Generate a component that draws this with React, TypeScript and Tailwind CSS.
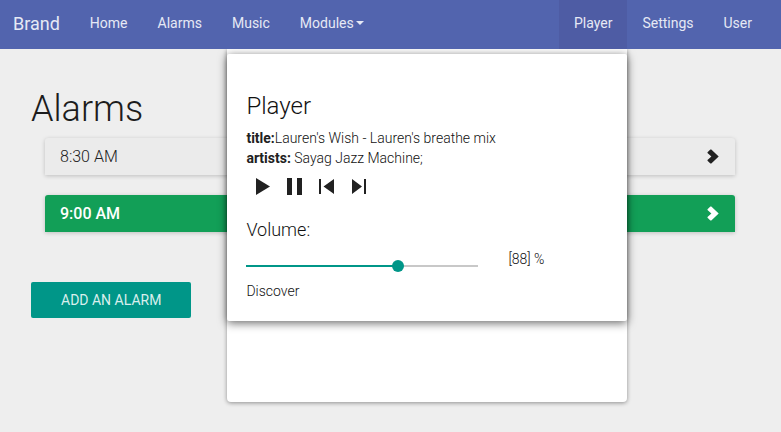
import { useState } from 'react';

const navLink = 'flex h-full items-center px-[15px] pb-[3px] hover:bg-[#4e5ca4]';

function Chevron() {
  return (
    <svg className="h-[15px] w-[12px]" viewBox="0 0 12 15" fill="currentColor" aria-hidden="true">
      <path d="M0.5 3.2 3.4 0.4 4.3 0.4 11.7 7.5 4.3 14.6 3.4 14.6 0.5 11.8 0.5 11 4.4 7.5 0.5 4Z" />
    </svg>
  );
}

function AlarmRow({ time, active }: { time: string; active?: boolean }) {
  const tone = active ? 'bg-[#129f57] font-medium text-white' : 'bg-[#ebebeb] font-light text-[#212121]';
  return (
    <li>
      <button
        type="button"
        className={`flex h-[37px] w-full items-center justify-between rounded-t-[3px] pr-[16px] pl-[15px] text-base shadow-[0_1px_4px_rgba(0,0,0,0.2)] ${tone}`}
      >
        <span>{time}</span>
        <Chevron />
      </button>
    </li>
  );
}

const controls = [
  { label: 'Play', path: 'M1 1 15 9.5 1 18Z' },
  { label: 'Pause', path: 'M0 1H5V18H0ZM10 1H15V18H10Z' },
  { label: 'Previous', path: 'M0 2H2V17H0ZM15 2V17L4.5 9.5Z' },
  { label: 'Next', path: 'M1 2 11 9.5 1 17ZM13 2H15V17H13Z' },
];

function PlayerCard() {
  const [position, setPosition] = useState(66);
  return (
    <section className="h-[267px] rounded-[2px] bg-white px-[19px] pt-[37px] font-light text-[#111111] shadow-[0_2px_10px_rgba(0,0,0,0.6)]">
      <h2 className="text-2xl leading-[30px]">Player</h2>
      <div className="mt-[7px] text-sm leading-5">
        <p>
          <b className="font-bold text-[#212121]">title:</b>Lauren's Wish - Lauren's breathe mix
        </p>
        <p>
          <b className="font-bold text-[#212121]">artists:</b> Sayag Jazz Machine;
        </p>
      </div>
      <div className="mt-[9px] flex gap-[15px] pl-[9px] text-[#212121]">
        {controls.map((control) => (
          <button key={control.label} type="button" aria-label={control.label}>
            <svg className="block h-[19px] w-[17px]" viewBox="0 0 17 19" fill="currentColor" aria-hidden="true">
              <path d={control.path} />
            </svg>
          </button>
        ))}
      </div>
      <label htmlFor="volume" className="mt-[24px] block text-lg leading-5">
        Volume:
      </label>
      <div className="mt-[9px] flex items-start gap-[30px]">
        <input
          id="volume"
          type="range"
          value={position}
          onChange={(event) => setPosition(Number(event.target.value))}
          style={{ backgroundImage: `linear-gradient(to right, #009688 ${position}%, #c8c8c8 ${position}%)` }}
          className="mt-[11px] h-3 w-[232px] appearance-none bg-[length:100%_2px] bg-center bg-no-repeat [&::-webkit-slider-thumb]:size-3 [&::-webkit-slider-thumb]:appearance-none [&::-webkit-slider-thumb]:rounded-full [&::-webkit-slider-thumb]:bg-[#009688]"
        />
        <output htmlFor="volume" className="text-sm leading-5">
          [{Math.round((position * 4) / 3)}] %
        </output>
      </div>
      <a href="#discover" className="mt-[9px] inline-block text-sm leading-5">
        Discover
      </a>
    </section>
  );
}

export default function App() {
  return (
    <div className="min-h-screen bg-[#eeeeee] font-[Roboto,sans-serif]">
      <nav className="relative z-10 flex h-[49px] bg-[#5264ae] pr-[14px] pl-[13px] text-sm font-normal text-[#e6e9f5]">
        <a href="#brand" className="flex items-center pr-[15px] pb-[2px] text-lg">
          Brand
        </a>
        <a href="#home" className={navLink}>Home</a>
        <a href="#alarms" className={navLink}>Alarms</a>
        <a href="#music" className={navLink}>Music</a>
        <button type="button" className={navLink}>
          Modules
          <span className="ml-[2px] border-x-4 border-t-4 border-x-transparent" />
        </button>
        <div className="relative ml-auto">
          <button type="button" aria-expanded="true" className={`${navLink} bg-[#4e5ca4]`}>
            Player
          </button>
          <div className="absolute top-full right-0 h-[353px] w-[400px] rounded-b-[4px] bg-white pt-[5px] shadow-[0_1px_4px_rgba(0,0,0,0.4)] [clip-path:inset(0_-20px_-20px_-20px)]">
            <PlayerCard />
          </div>
        </div>
        <a href="#settings" className={navLink}>Settings</a>
        <a href="#user" className={navLink}>User</a>
      </nav>
      <main className="px-[31px] pt-[40px]">
        <h1 className="text-4xl leading-10 font-light text-[#1c1c1c]">Alarms</h1>
        <ul className="mt-[9px] mr-[15px] ml-[14px] flex flex-col gap-5">
          <AlarmRow time="8:30 AM" />
          <AlarmRow time="9:00 AM" active />
        </ul>
        <button
          type="button"
          className="mt-[50px] h-9 rounded-[2px] bg-[#009688] px-[30px] pb-px text-sm font-normal text-[#d9efed] uppercase"
        >
          Add an alarm
        </button>
      </main>
    </div>
  );
}
